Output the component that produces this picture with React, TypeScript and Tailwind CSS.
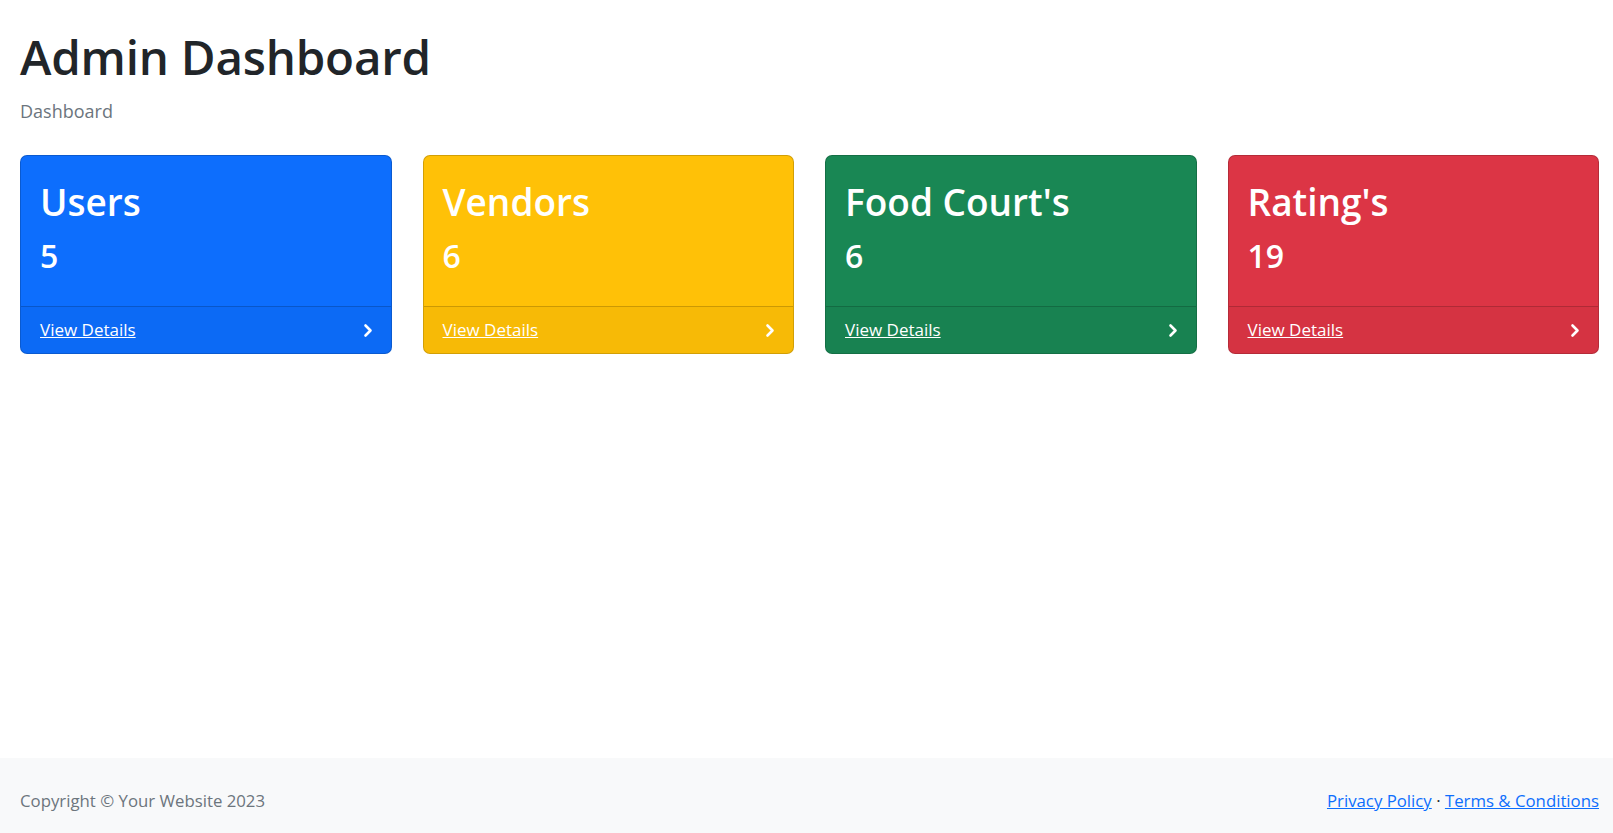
import React from "react";

const cards = [
  { title: "Users", value: "5", bg: "bg-[#0d6efd]" },
  { title: "Vendors", value: "6", bg: "bg-[#ffc107]" },
  { title: "Food Court's", value: "6", bg: "bg-[#198754]" },
  { title: "Rating's", value: "19", bg: "bg-[#dc3545]" },
];

function Chevron() {
  return (
    <svg width="10" height="15" viewBox="0 0 10 15" fill="none" aria-hidden="true">
      <path d="M2.5 2.5 L7.5 7.5 L2.5 12.5" stroke="white" strokeWidth="2.6" strokeLinecap="round" strokeLinejoin="round" />
    </svg>
  );
}

export default function App() {
  return (
    <div
      className="min-h-screen flex flex-col bg-white"
      style={{ fontFamily: '"Open Sans", "Noto Sans", sans-serif' }}
    >
      <main className="flex-1 pl-[20px] pr-[14px]">
        <h1 className="mt-[28px] text-[47.5px] leading-[58px] font-semibold tracking-[-0.2px] text-[#212529]">
          Admin Dashboard
        </h1>
        <div className="mt-[13px] text-[18px] leading-[24px] text-[#6c757d]">Dashboard</div>
        <div className="mt-[32px] grid grid-cols-4 gap-[31px]">
          {cards.map((c) => (
            <div
              key={c.title}
              className={`${c.bg} rounded-[7px] border border-black/[0.175] overflow-hidden text-white`}
            >
              <div className="px-[19px] pt-[24px] pb-[30px]">
                <div className="text-[37px] leading-[44px] font-semibold">{c.title}</div>
                <div className="mt-[12px] text-[32px] leading-[40px] font-semibold">{c.value}</div>
              </div>
              <div className="flex items-center justify-between border-t border-black/[0.175] bg-black/[0.03] pl-[19px] pr-[18px] py-[11px]">
                <a href="#" className="text-[17px] leading-[24px] underline text-white">
                  View Details
                </a>
                <Chevron />
              </div>
            </div>
          ))}
        </div>
      </main>
      <footer className="h-[75px] bg-[#f8f9fa] pl-[20px] pr-[14px] pt-[31px]">
        <div className="flex items-start justify-between text-[16.8px] leading-[24px]">
          <div className="text-[#6c757d]">Copyright © Your Website 2023</div>
          <div className="text-[#212529]">
            <a href="#" className="text-[#0d6efd] underline">Privacy Policy</a>
            {" · "}
            <a href="#" className="text-[#0d6efd] underline">Terms &amp; Conditions</a>
          </div>
        </div>
      </footer>
    </div>
  );
}
